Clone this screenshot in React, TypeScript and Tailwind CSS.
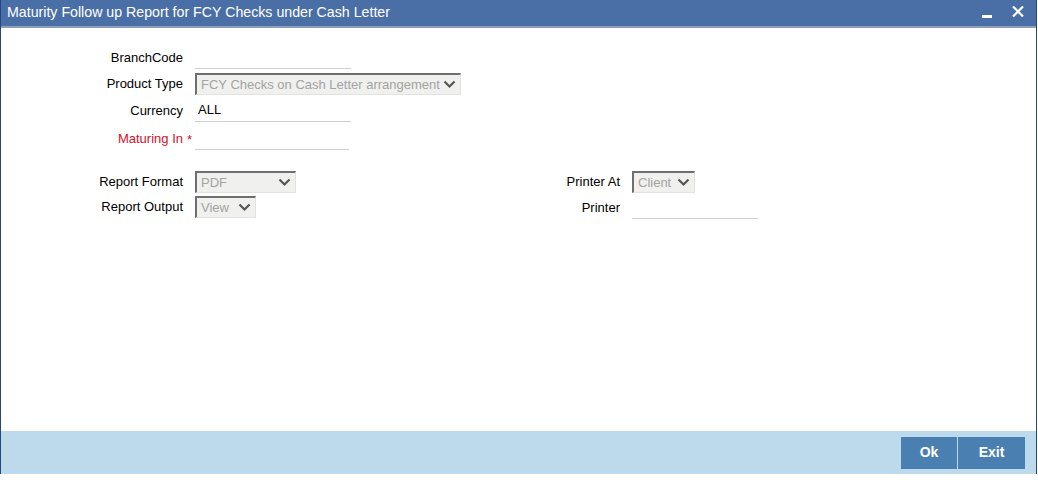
import React from 'react';

const Chevron: React.FC = () => (
  <svg width="13" height="9" viewBox="0 0 13 9" className="shrink-0">
    <polyline points="1.5,1.5 6.5,6.5 11.5,1.5" fill="none" stroke="#555" strokeWidth="2.2" />
  </svg>
);

const Select: React.FC<{ value: string; width: string }> = ({ value, width }) => (
  <div
    className={`${width} h-[22px] flex items-center justify-between pl-[4px] pr-[4px] bg-[#f0f0ee] border-t-[2px] border-l-[2px] border-t-[#6f6f6f] border-l-[#6f6f6f] border-r border-b border-r-[#e2e2e2] border-b-[#e2e2e2] text-[#a3a3a3] text-[13px] leading-none`}
  >
    <span className="whitespace-nowrap">{value}</span>
    <Chevron />
  </div>
);

const Underline: React.FC<{ value?: string; width: string }> = ({ value, width }) => (
  <div className={`${width} h-[23px] flex items-center pl-[3px] border-b border-[#cfcfcf] text-[13px] text-black`}>
    {value}
  </div>
);

const Label: React.FC<{ children: React.ReactNode; width?: string; red?: boolean }> = ({ children, width = 'w-[183px]', red }) => (
  <div className={`${width} shrink-0 text-right pr-[1px] text-[13px] ${red ? 'text-[#d0112b]' : 'text-black'}`}>{children}</div>
);

export default function App() {
  return (
    <div className="w-[1038px] h-[483px] bg-white" style={{ fontFamily: '"Liberation Sans", Arial, sans-serif' }}>
      <div className="w-[1037px] h-[474px] flex flex-col border-l border-r border-[#23477a]">
        <div className="h-[28px] shrink-0 bg-[#4a6fa6] border-b-[2px] border-[#8ea0b8] flex items-center justify-between pl-[6px] pr-[12px]">
          <span className="text-white text-[14.2px]">Maturity Follow up Report for FCY Checks under Cash Letter</span>
          <div className="flex items-start gap-[20px] text-white h-[12px]">
            <div className="w-[10px] h-[3px] bg-white mt-[8px]" />
            <svg width="12" height="11" viewBox="0 0 12 11" className="-mt-[1px]">
              <path d="M1 0.5L11 10.5M11 0.5L1 10.5" stroke="white" strokeWidth="2.2" />
            </svg>
          </div>
        </div>

        <div className="flex-1 flex flex-col pt-[18px]">
          <div className="flex items-center gap-[11px]">
            <Label>BranchCode</Label>
            <Underline width="w-[156px]" />
          </div>
          <div className="flex items-center gap-[11px] mt-[4px]">
            <Label>Product Type</Label>
            <Select value="FCY Checks on Cash Letter arrangement" width="w-[266px]" />
          </div>
          <div className="flex items-center gap-[11px] mt-[4px]">
            <Label>Currency</Label>
            <Underline value="ALL" width="w-[156px]" />
          </div>
          <div className="flex items-center mt-[5px]">
            <Label red>Maturing In</Label>
            <span className="w-[11px] pl-[3px] text-[13px] text-[#d0112b] self-start mt-[3px]">*</span>
            <Underline width="w-[154px]" />
          </div>

          <div className="flex mt-[21px]">
            <div className="w-[540px] flex flex-col gap-[3px]">
              <div className="flex items-center gap-[11px]">
                <Label>Report Format</Label>
                <Select value="PDF" width="w-[101px]" />
              </div>
              <div className="flex items-center gap-[11px]">
                <Label>Report Output</Label>
                <Select value="View" width="w-[61px]" />
              </div>
            </div>
            <div className="flex flex-col gap-[3px]">
              <div className="flex items-center gap-[11px]">
                <Label width="w-[80px]">Printer At</Label>
                <Select value="Client" width="w-[63px]" />
              </div>
              <div className="flex items-center gap-[11px]">
                <Label width="w-[80px]">Printer</Label>
                <Underline width="w-[126px]" />
              </div>
            </div>
          </div>
        </div>

        <div className="h-[43px] shrink-0 bg-[#bdd9ec] flex items-center justify-end pr-[11px]">
          <div className="flex gap-[1px]">
            <button className="w-[56px] h-[32px] bg-[#4a80b1] text-white text-[14px] font-bold">Ok</button>
            <button className="w-[67px] h-[32px] bg-[#4a80b1] text-white text-[14px] font-bold">Exit</button>
          </div>
        </div>
      </div>
    </div>
  );
}
